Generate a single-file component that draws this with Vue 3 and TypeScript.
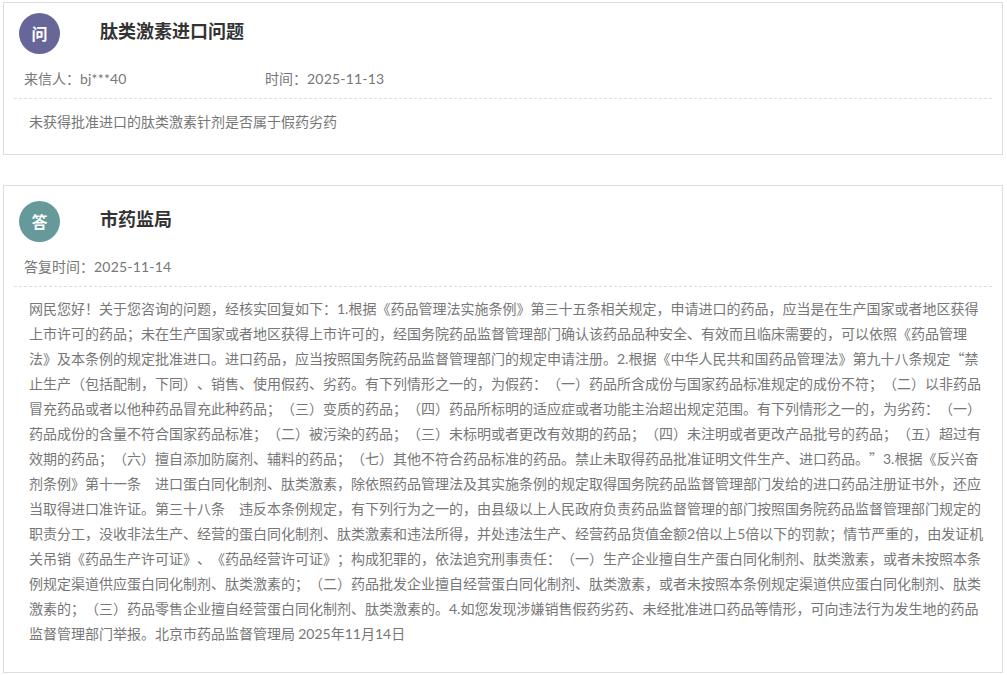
<script setup lang="ts">
interface Card {
  badge: string
  tone: string
  title: string
  meta: string[]
  lines: string[]
}
const cards: Card[] = [
  {
    badge: '问',
    tone: 'ask',
    title: '肽类激素进口问题',
    meta: ['来信人：bj***40', '时间：2025-11-13'],
    lines: ['未获得批准进口的肽类激素针剂是否属于假药劣药']
  },
  {
    badge: '答',
    tone: 'reply',
    title: '市药监局',
    meta: ['答复时间：2025-11-14'],
    lines: [
      '网民您好！关于您咨询的问题，经核实回复如下：1.根据《药品管理法实施条例》第三十五条相关规定，申请进口的药品，应当是在生产国家或者地区获得',
      '上市许可的药品；未在生产国家或者地区获得上市许可的，经国务院药品监督管理部门确认该药品品种安全、有效而且临床需要的，可以依照《药品管理',
      '法》及本条例的规定批准进口。进口药品，应当按照国务院药品监督管理部门的规定申请注册。2.根据《中华人民共和国药品管理法》第九十八条规定“禁',
      '止生产（包括配制，下同）、销售、使用假药、劣药。有下列情形之一的，为假药：（一）药品所含成份与国家药品标准规定的成份不符；（二）以非药品',
      '冒充药品或者以他种药品冒充此种药品；（三）变质的药品；（四）药品所标明的适应症或者功能主治超出规定范围。有下列情形之一的，为劣药：（一）',
      '药品成份的含量不符合国家药品标准；（二）被污染的药品；（三）未标明或者更改有效期的药品；（四）未注明或者更改产品批号的药品；（五）超过有',
      '效期的药品；（六）擅自添加防腐剂、辅料的药品；（七）其他不符合药品标准的药品。禁止未取得药品批准证明文件生产、进口药品。”3.根据《反兴奋',
      '剂条例》第十一条　进口蛋白同化制剂、肽类激素，除依照药品管理法及其实施条例的规定取得国务院药品监督管理部门发给的进口药品注册证书外，还应',
      '当取得进口准许证。第三十八条　违反本条例规定，有下列行为之一的，由县级以上人民政府负责药品监督管理的部门按照国务院药品监督管理部门规定的',
      '职责分工，没收非法生产、经营的蛋白同化制剂、肽类激素和违法所得，并处违法生产、经营药品货值金额2倍以上5倍以下的罚款；情节严重的，由发证机',
      '关吊销《药品生产许可证》、《药品经营许可证》；构成犯罪的，依法追究刑事责任：（一）生产企业擅自生产蛋白同化制剂、肽类激素，或者未按照本条',
      '例规定渠道供应蛋白同化制剂、肽类激素的；（二）药品批发企业擅自经营蛋白同化制剂、肽类激素，或者未按照本条例规定渠道供应蛋白同化制剂、肽类',
      '激素的；（三）药品零售企业擅自经营蛋白同化制剂、肽类激素的。4.如您发现涉嫌销售假药劣药、未经批准进口药品等情形，可向违法行为发生地的药品',
      '监督管理部门举报。北京市药品监督管理局 2025年11月14日'
    ]
  }
]

function runs(text: string): { text: string; latin: boolean }[] {
  return text
    .split(/([0-9A-Za-z*.\-]+)/)
    .filter(Boolean)
    .map((part) => ({ text: part, latin: /^[0-9A-Za-z*.\-]+$/.test(part) }))
}
</script>

<template>
  <main class="page">
    <section v-for="card in cards" :key="card.badge" class="card" :class="card.tone">
      <header class="head">
        <span class="badge">{{ card.badge }}</span>
        <h2 class="title">{{ card.title }}</h2>
      </header>
      <div class="meta">
        <span v-for="item in card.meta" :key="item" class="meta-item">
          <span v-for="(r, i) in runs(item)" :key="i" :class="{ latin: r.latin }">{{ r.text }}</span>
        </span>
      </div>
      <div class="body">
        <p v-for="line in card.lines" :key="line" class="line">
          <span v-for="(r, i) in runs(line)" :key="i" :class="{ latin: r.latin }">{{ r.text }}</span>
        </p>
      </div>
    </section>
  </main>
</template>

<style>
html, body { margin: 0; background: #fff; overflow: hidden; }
</style>

<style scoped>
.page {
  width: 1000px;
  padding: 2px 0 0 3px;
  display: flex;
  flex-direction: column;
  gap: 30px;
  font-family: "Noto Sans CJK SC", "Liberation Sans", sans-serif;
  font-size: 14px;
  color: #777;
  text-spacing-trim: space-all;
  font-kerning: none;
}
.latin { font-family: "Lato", "Liberation Sans", sans-serif; }
.card {
  border: 1px solid #ddd;
  box-sizing: border-box;
  padding: 10px 10px 0;
}
.ask { height: 153px; }
.reply { height: 488px; padding-top: 15px; }
.head {
  display: flex;
  align-items: center;
  gap: 40px;
  padding-left: 5px;
  height: 41px;
}
.badge {
  box-sizing: border-box;
  width: 41px;
  height: 41px;
  padding-bottom: 2px;
  border-radius: 50%;
  display: flex;
  align-items: center;
  justify-content: center;
  color: #fff;
  font-size: 16px;
  font-weight: 700;
}
.ask .badge { background: #666699; }
.reply .badge { background: #669999; }
.title {
  margin: 0 0 8px;
  font-size: 18px;
  font-weight: 700;
  color: #333;
  line-height: 26px;
}
.meta {
  display: flex;
  padding: 12px 0 0 10px;
  height: 32px;
  line-height: 24px;
  border-bottom: 1px dashed #ddd;
  width: 968px;
}
.meta .latin { letter-spacing: 0.2px; }
.meta-item { width: 241px; }
.body { padding: 10px 0 0 15px; }
.reply .body { padding-top: 9px; }
.line {
  margin: 0;
  line-height: 25px;
  white-space: nowrap;
}
</style>
